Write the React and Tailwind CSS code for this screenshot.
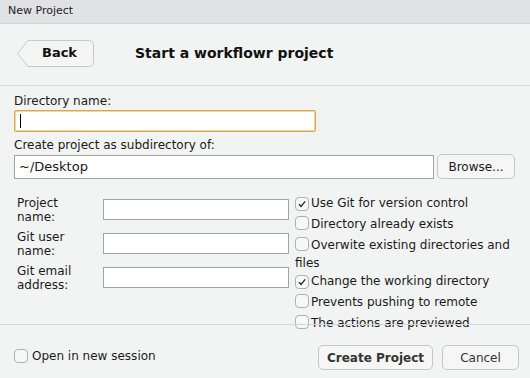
import React from "react";

function Check({ checked }) {
  return (
    <span className="inline-flex items-center justify-center w-[14px] h-[14px] border border-[#b0b0b0] rounded-[4px] bg-[#f7f7f7] align-[-2px] mr-[2px]">
      {checked && (
        <svg width="10" height="10" viewBox="0 0 10 10">
          <path d="M2 5.2 L4 7.4 L8.2 2.4" fill="none" stroke="#222" strokeWidth="1.3" />
        </svg>
      )}
    </span>
  );
}

function BackButton() {
  return (
    <button className="relative w-[77px] h-[27px] text-[13px] font-bold text-[#111]">
      <svg className="absolute inset-0" width="77" height="27" viewBox="0 0 77 27">
        <path
          d="M0.5 13.5 L11 0.5 L72.5 0.5 Q76.5 0.5 76.5 4.5 L76.5 22.5 Q76.5 26.5 72.5 26.5 L11 26.5 Z"
          fill="#f5f5f5"
          stroke="#c9c9c9"
        />
      </svg>
      <span className="relative pl-[8px]">Back</span>
    </button>
  );
}

const fields = [
  ["Project", "name:"],
  ["Git user", "name:"],
  ["Git email", "address:"],
];

const options = [
  ["Use Git for version control", true],
  ["Directory already exists", false],
  ["Overwite existing directories and files", false],
  ["Change the working directory", true],
  ["Prevents pushing to remote", false],
  ["The actions are previewed", false],
];

export default function App() {
  return (
    <div className="w-[530px] h-[378px] bg-[#f2f3f3] text-[12px] text-[#1a1a1a] font-['DejaVu_Sans',sans-serif] overflow-hidden flex flex-col">
      <div className="h-[24px] shrink-0 bg-[#e1e2e5] border-b border-[#d3d4d7] pl-[8px] flex items-center text-[11px] text-[#222]">
        New Project
      </div>
      <div className="h-[62px] shrink-0 border-b border-[#d9d9d9] flex items-center pl-[17px] pb-[3px]">
        <BackButton />
        <h1 className="ml-[41px] text-[14px] font-bold text-[#111]">Start a workflowr project</h1>
      </div>

      <div className="px-[14px] pt-[7px] flex flex-col shrink-0">
        <label className="leading-[16px]">Directory name:</label>
        <div className="mt-[1px] w-[302px] h-[22px] border border-[#d9a646] rounded-[2px] bg-white shadow-[inset_0_0_0_1px_#f1d9a6] flex items-center pl-[5px]">
          <span className="w-[1px] h-[14px] bg-black" />
        </div>
        <label className="mt-[5px] leading-[16px]">Create project as subdirectory of:</label>
        <div className="mt-[1px] flex items-center gap-[3px]">
          <div className="w-[420px] h-[24px] border border-[#a3a3a3] bg-white flex items-center pl-[4px] text-[13px]">
            ~/Desktop
          </div>
          <button className="w-[78px] h-[25px] border border-[#c6c6c6] rounded-[5px] bg-[#f6f6f6] text-[12px]">
            Browse...
          </button>
        </div>
      </div>

      <div className="flex pl-[17px] pt-[17px] h-[145px] shrink-0">
        <div className="flex flex-col gap-[6px] w-[276px]">
          {fields.map(([a, b]) => (
            <div key={a} className="flex items-start">
              <div className="w-[86px] leading-[14px]">
                {a}
                <br />
                {b}
              </div>
              <div className="mt-[3px] w-[186px] h-[21px] border border-[#a3a3a3] bg-white" />
            </div>
          ))}
        </div>
        <div className="w-[232px] -ml-[1px] flex flex-col gap-[3px] leading-[18px] -mt-[2px]">
          {options.map(([t, c], i) => (
            <div key={t} className={i === 2 ? "pl-[3px] -mb-[3px]" : "pl-[3px]"}>
              <Check checked={c} />
              {t}
            </div>
          ))}
        </div>
      </div>

      <div className="relative z-10 border-t border-[#d4d4d4] flex-1 flex items-start pt-[20px] pl-[14px] pr-[11px]">
        <label className="flex items-center gap-[2px] mt-[2px]">
          <Check checked={false} />
          Open in new session
        </label>
        <div className="ml-auto flex gap-[9px]">
          <button className="w-[115px] h-[25px] border border-[#c6c6c6] rounded-[5px] bg-[#f6f6f6] font-bold text-[#333]">
            Create Project
          </button>
          <button className="w-[77px] h-[25px] border border-[#c6c6c6] rounded-[5px] bg-[#f6f6f6] text-[#333]">
            Cancel
          </button>
        </div>
      </div>
    </div>
  );
}
